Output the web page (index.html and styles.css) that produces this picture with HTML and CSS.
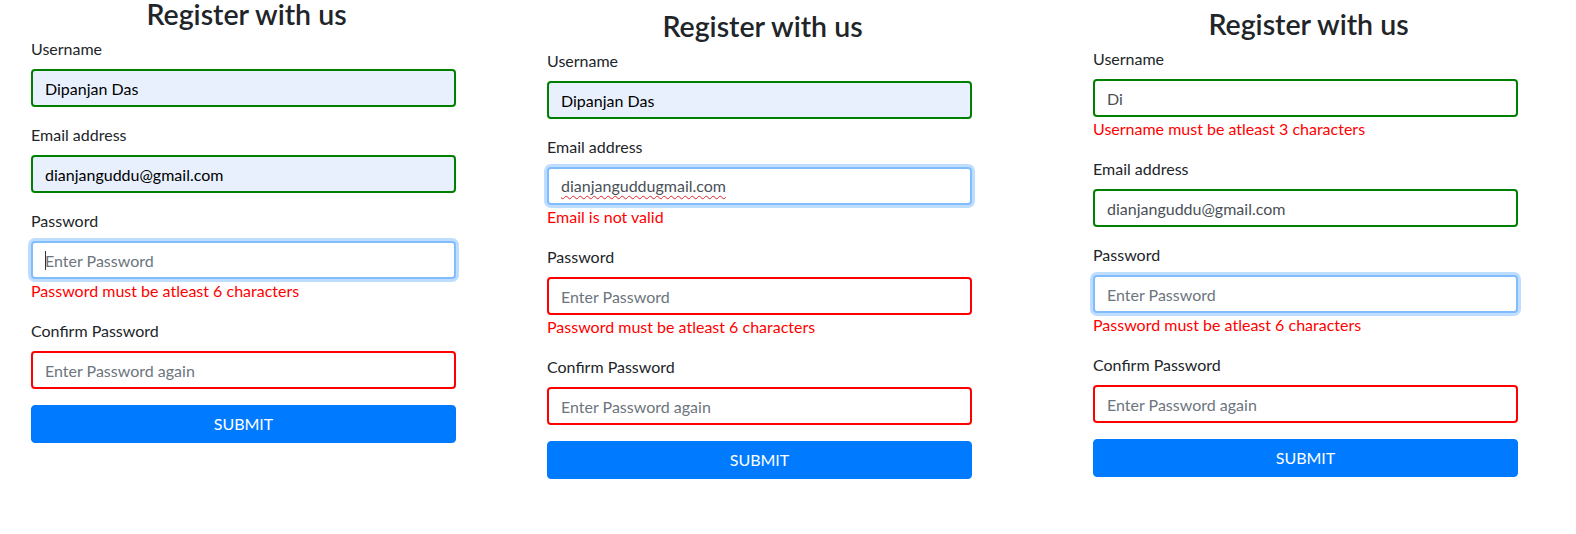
FILE: index.html
```html
<!DOCTYPE html>
<html lang="en">
<head>
<meta charset="utf-8">
<title>Register with us</title>
<link rel="stylesheet" href="styles.css">
</head>
<body>
<main class="page">
  <form class="panel panel--one">
    <h3 class="title">Register with us</h3>
    <div class="field">
      <label class="label">Username</label>
      <input class="control control--ok control--autofill" type="text" value="Dipanjan Das" readonly>
    </div>
    <div class="field">
      <label class="label">Email address</label>
      <input class="control control--ok control--autofill" type="text" value="dianjanguddu@gmail.com" readonly>
    </div>
    <div class="field">
      <label class="label">Password</label>
      <div class="control-wrap">
        <input class="control control--focus" type="text" placeholder="Enter Password" readonly>
        <span class="caret"></span>
      </div>
      <div class="error">Password must be atleast 6 characters</div>
    </div>
    <div class="field">
      <label class="label">Confirm Password</label>
      <input class="control control--bad" type="text" placeholder="Enter Password again" readonly>
    </div>
    <button class="submit" type="button">SUBMIT</button>
  </form>

  <form class="panel panel--two">
    <h3 class="title">Register with us</h3>
    <div class="field">
      <label class="label">Username</label>
      <input class="control control--ok control--autofill" type="text" value="Dipanjan Das" readonly>
    </div>
    <div class="field">
      <label class="label">Email address</label>
      <div class="control control--focus control--static"><span class="misspelt">dianjanguddugmail.com</span></div>
      <div class="error">Email is not valid</div>
    </div>
    <div class="field">
      <label class="label">Password</label>
      <input class="control control--bad" type="text" placeholder="Enter Password" readonly>
      <div class="error">Password must be atleast 6 characters</div>
    </div>
    <div class="field">
      <label class="label">Confirm Password</label>
      <input class="control control--bad" type="text" placeholder="Enter Password again" readonly>
    </div>
    <button class="submit" type="button">SUBMIT</button>
  </form>

  <form class="panel panel--three">
    <h3 class="title">Register with us</h3>
    <div class="field">
      <label class="label">Username</label>
      <input class="control control--ok" type="text" value="Di" readonly>
      <div class="error">Username must be atleast 3 characters</div>
    </div>
    <div class="field">
      <label class="label">Email address</label>
      <input class="control control--ok" type="text" value="dianjanguddu@gmail.com" readonly>
    </div>
    <div class="field">
      <label class="label">Password</label>
      <input class="control control--focus" type="text" placeholder="Enter Password" readonly>
      <div class="error">Password must be atleast 6 characters</div>
    </div>
    <div class="field">
      <label class="label">Confirm Password</label>
      <input class="control control--bad" type="text" placeholder="Enter Password again" readonly>
    </div>
    <button class="submit" type="button">SUBMIT</button>
  </form>
</main>
</body>
</html>
```

FILE: styles.css
```css
* { box-sizing: border-box; }

html, body {
  margin: 0;
  padding: 0;
  background: #fff;
}

body {
  font-family: Lato, "Liberation Sans", sans-serif;
  font-size: 16px;
  line-height: 24px;
  color: #212529;
}

.page {
  display: flex;
  align-items: flex-start;
  padding-left: 31px;
}

.panel {
  width: 425px;
  flex: 0 0 425px;
  margin: 0;
}

.panel--one { margin-top: 0; }
.panel--two { margin-top: 12px; margin-left: 91px; }
.panel--three { margin-top: 10px; margin-left: 121px; }

.title {
  margin: 0 0 9px;
  padding-left: 6px;
  font-size: 28.5px;
  line-height: 28px;
  font-weight: 600;
  text-align: center;
  color: #212529;
}

.field {
  margin-bottom: 16px;
}

.label {
  display: block;
  margin-bottom: 8px;
  line-height: 24px;
  color: #212529;
}

.control-wrap {
  position: relative;
}

.control {
  display: block;
  width: 100%;
  height: 38px;
  margin: 0;
  padding: 6px 12px;
  font-family: inherit;
  font-size: 16px;
  line-height: 24px;
  color: #495057;
  background: #fff;
  border: 2px solid #ced4da;
  border-radius: 4px;
  outline: none;
}

.control::placeholder {
  color: #6c757d;
  opacity: 1;
}

.control--static {
  display: flex;
  align-items: center;
  padding-top: 0;
  padding-bottom: 0;
}

.control--ok { border-color: #008000; }
.control--bad { border-color: #ff0000; }

.control--autofill {
  background: #e8f0fe;
  color: #000;
}

.control--focus {
  border-color: #80bdff;
  box-shadow: 0 0 0 3px rgba(0, 123, 255, 0.25);
}

.misspelt {
  text-decoration-line: underline;
  text-decoration-style: wavy;
  text-decoration-color: #e0242b;
  text-decoration-thickness: 1px;
  text-underline-offset: 3px;
  text-decoration-skip-ink: none;
}

.caret {
  position: absolute;
  left: 14px;
  top: 10px;
  width: 1px;
  height: 19px;
  background: #333;
}

.error {
  color: #ff0000;
  line-height: 24px;
}

.submit {
  display: block;
  width: 100%;
  height: 38px;
  margin: 0;
  padding: 6px 12px;
  font-family: inherit;
  font-size: 16px;
  line-height: 24px;
  color: #fff;
  background: #007bff;
  border: 1px solid #007bff;
  border-radius: 4px;
  text-align: center;
}
```
